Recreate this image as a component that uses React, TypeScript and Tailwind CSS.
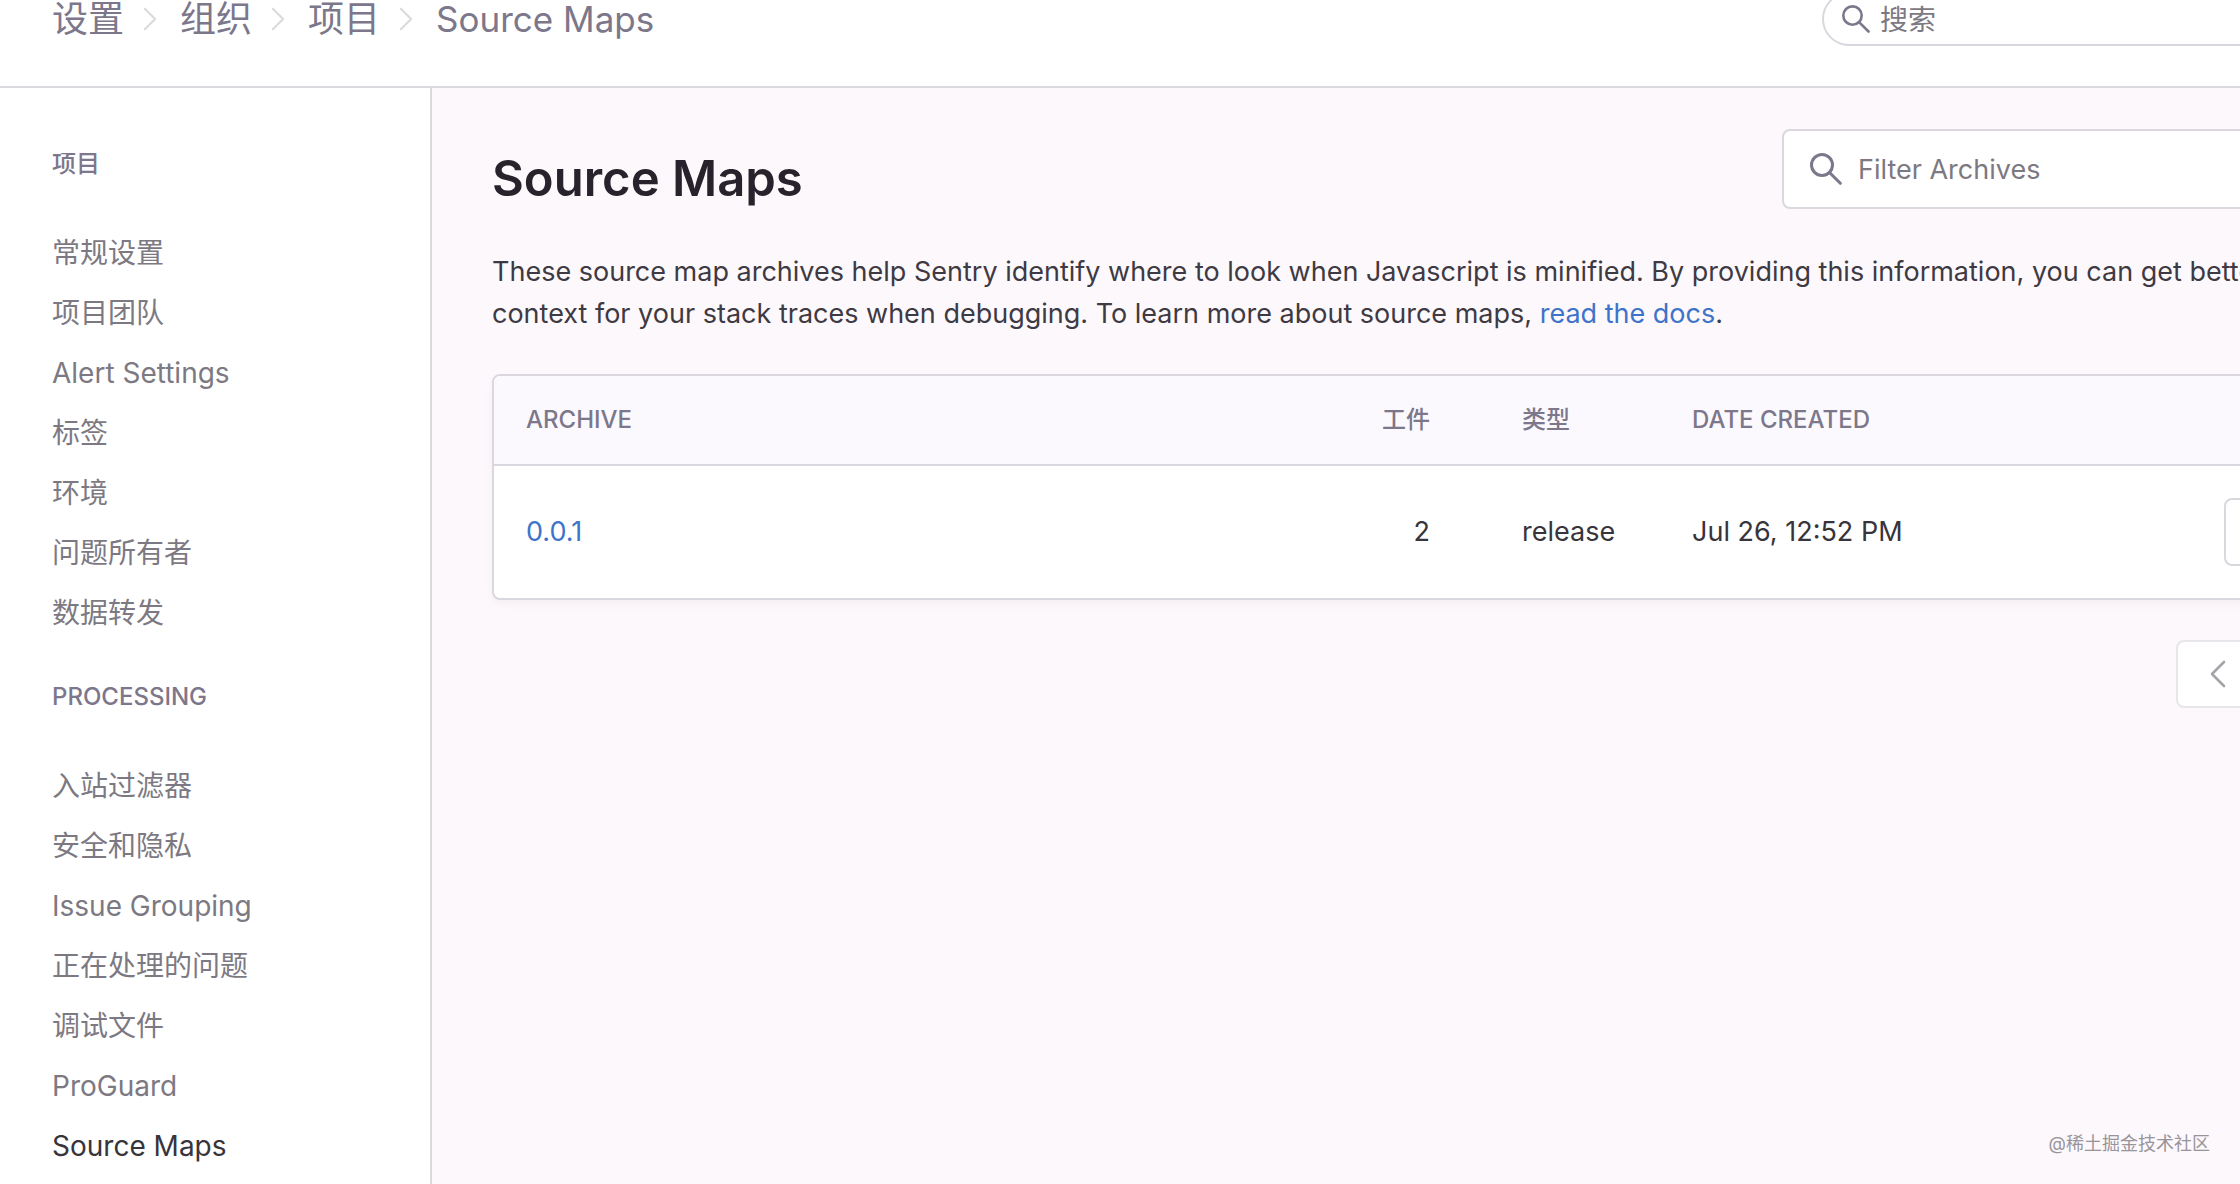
import type { ReactNode } from "react";

const SECTIONS = [
  {
    title: "项目",
    items: ["常规设置", "项目团队", "Alert Settings", "标签", "环境", "问题所有者", "数据转发"],
  },
  {
    title: "PROCESSING",
    items: ["入站过滤器", "安全和隐私", "Issue Grouping", "正在处理的问题", "调试文件", "ProGuard", "Source Maps"],
  },
];

const CRUMBS = ["设置", "组织", "项目"];

const ARCHIVES = [{ name: "0.0.1", artifacts: 2, type: "release", date: "Jul 26, 12:52 PM" }];

function SearchIcon({ className }: { className: string }) {
  return (
    <svg viewBox="0 0 32 32" fill="none" stroke="currentColor" strokeWidth="3" strokeLinecap="round" className={className} aria-hidden="true">
      <circle cx="12" cy="12" r="10.5" />
      <path d="M19.5 19.5 30.3 30.3" />
    </svg>
  );
}

function Chevron({ className }: { className: string }) {
  return (
    <svg viewBox="0 0 16 28" fill="none" stroke="currentColor" strokeWidth="2.6" strokeLinecap="round" strokeLinejoin="round" className={className} aria-hidden="true">
      <path d="M2 2 14 14 2 26" />
    </svg>
  );
}

function PageButton({ label, className, children }: { label: string; className: string; children: ReactNode }) {
  return (
    <button aria-label={label} className={`flex h-[68px] w-[84px] items-center justify-center border-2 border-[#e8e5eb] bg-white text-[#a5a2a8] ${className}`}>
      {children}
    </button>
  );
}

function Header() {
  return (
    <header className="-mt-12 flex h-[136px] shrink-0 items-center justify-between border-b-2 border-[#dad9dd] bg-white pl-[52px]">
      <nav aria-label="Breadcrumb" className="flex items-center text-[36px] leading-[44px] text-[#7c778a]">
        {CRUMBS.map((crumb) => (
          <div key={crumb} className="flex items-center">
            <a href="#">{crumb}</a>
            <Chevron className="ml-[18px] mr-[22px] h-6 w-4 text-[#dcdadf]" />
          </div>
        ))}
        <a href="#" className="text-[35px]">Source Maps</a>
      </nav>
      <label className="-mr-[72px] flex h-[54px] w-[490px] items-center gap-2.5 rounded-full border-2 border-[#dad7de] pl-[18px] text-[#7c778a]">
        <SearchIcon className="h-7 w-7 shrink-0" />
        <input type="text" aria-label="搜索" placeholder="搜索" className="min-w-0 flex-1 bg-transparent pt-0.5 text-[28px] leading-9 outline-none placeholder:text-[#7c7982]" />
      </label>
    </header>
  );
}

function Sidebar() {
  return (
    <aside className="w-[432px] shrink-0 border-r-2 border-[#dad9dd] bg-white pl-[52px] pt-[58px]">
      {SECTIONS.map((section) => (
        <section key={section.title} className="mb-9">
          <h2 className="mb-[41px] text-[24px] font-medium leading-9 text-[#7c778a]">{section.title}</h2>
          <ul>
            {section.items.map((item) => (
              <li key={item}>
                <a
                  href="#"
                  className={`block text-[28px] leading-[60px] ${item === "Source Maps" ? "text-[#37343b]" : "text-[#7c7982]"}`}
                >
                  {item}
                </a>
              </li>
            ))}
          </ul>
        </section>
      ))}
    </aside>
  );
}

function ArchiveTable() {
  return (
    <div className="overflow-hidden rounded-lg border-2 border-[#dad7de] bg-white shadow-[0_4px_8px_rgba(43,34,51,0.04)]">
      <table className="w-full table-fixed text-left">
        <colgroup>
          <col />
          <col className="w-[200px]" />
          <col className="w-[170px]" />
          <col className="w-[532px]" />
          <col className="w-[150px]" />
        </colgroup>
        <thead>
          <tr className="h-[89px] border-b-2 border-[#dad7de] bg-[#fbf9fe] text-[24px] text-[#7c778a]">
            <th className="pl-8 font-medium">ARCHIVE</th>
            <th className="pr-[60px] text-right font-medium">工件</th>
            <th className="pl-8 font-medium">类型</th>
            <th className="pl-8 font-medium">DATE CREATED</th>
            <td />
          </tr>
        </thead>
        <tbody>
          {ARCHIVES.map((archive) => (
            <tr key={archive.name} className="h-[133px] text-[27px] text-[#37343b]">
              <td className="pl-8">
                <a href="#" className="text-[#3d74c9]">{archive.name}</a>
              </td>
              <td className="pr-[60px] text-right">{archive.artifacts}</td>
              <td className="pl-8">{archive.type}</td>
              <td className="pl-8">{archive.date}</td>
              <td className="pl-8">
                <button aria-label="Remove" className="block h-[68px] w-[68px] rounded-lg border-2 border-[#dad7de] bg-white" />
              </td>
            </tr>
          ))}
        </tbody>
      </table>
    </div>
  );
}

export default function App() {
  return (
    <div lang="zh-CN" className="relative flex h-screen flex-col overflow-hidden bg-white font-[Inter,'Noto_Sans_CJK_SC',sans-serif]">
      <Header />
      <div className="flex min-h-0 flex-1">
        <Sidebar />
        <main className="min-w-0 flex-1 bg-[#fdf8fc] pl-[60px]">
          <div className="-mr-[104px]">
            <div className="flex items-start justify-between pt-[41px]">
              <h1 className="pt-4 text-[49px] font-semibold leading-[68px] text-[#27232c]">Source Maps</h1>
              <label className="flex h-20 w-[562px] items-center gap-4 rounded-lg border-2 border-[#dad7de] bg-white pl-[26px] text-[#7c778a]">
                <SearchIcon className="h-8 w-8 shrink-0" />
                <input type="text" aria-label="Filter Archives" placeholder="Filter Archives" className="min-w-0 flex-1 bg-transparent pt-0.5 text-[27px] leading-9 outline-none placeholder:text-[#7c7982]" />
              </label>
            </div>
            <p className="mb-[39px] mt-[38px] text-[27px] leading-[42px] text-[#3e3a43]">
              These source map archives help Sentry identify where to look when Javascript is minified. By providing this
              information, you can get better context for your stack traces when debugging. To learn more about source
              maps, <a href="#" className="text-[#3d74c9]">read the docs</a>.
            </p>
            <ArchiveTable />
            <div className="mt-10 flex justify-end">
              <PageButton label="Previous" className="rounded-l-lg">
                <Chevron className="h-7 w-4 rotate-180" />
              </PageButton>
              <PageButton label="Next" className="rounded-r-lg border-l-0">
                <Chevron className="h-7 w-4" />
              </PageButton>
            </div>
          </div>
        </main>
      </div>
      <span className="absolute bottom-[26px] right-[30px] text-[18px] leading-7 text-[#98949a]">@稀土掘金技术社区</span>
    </div>
  );
}
